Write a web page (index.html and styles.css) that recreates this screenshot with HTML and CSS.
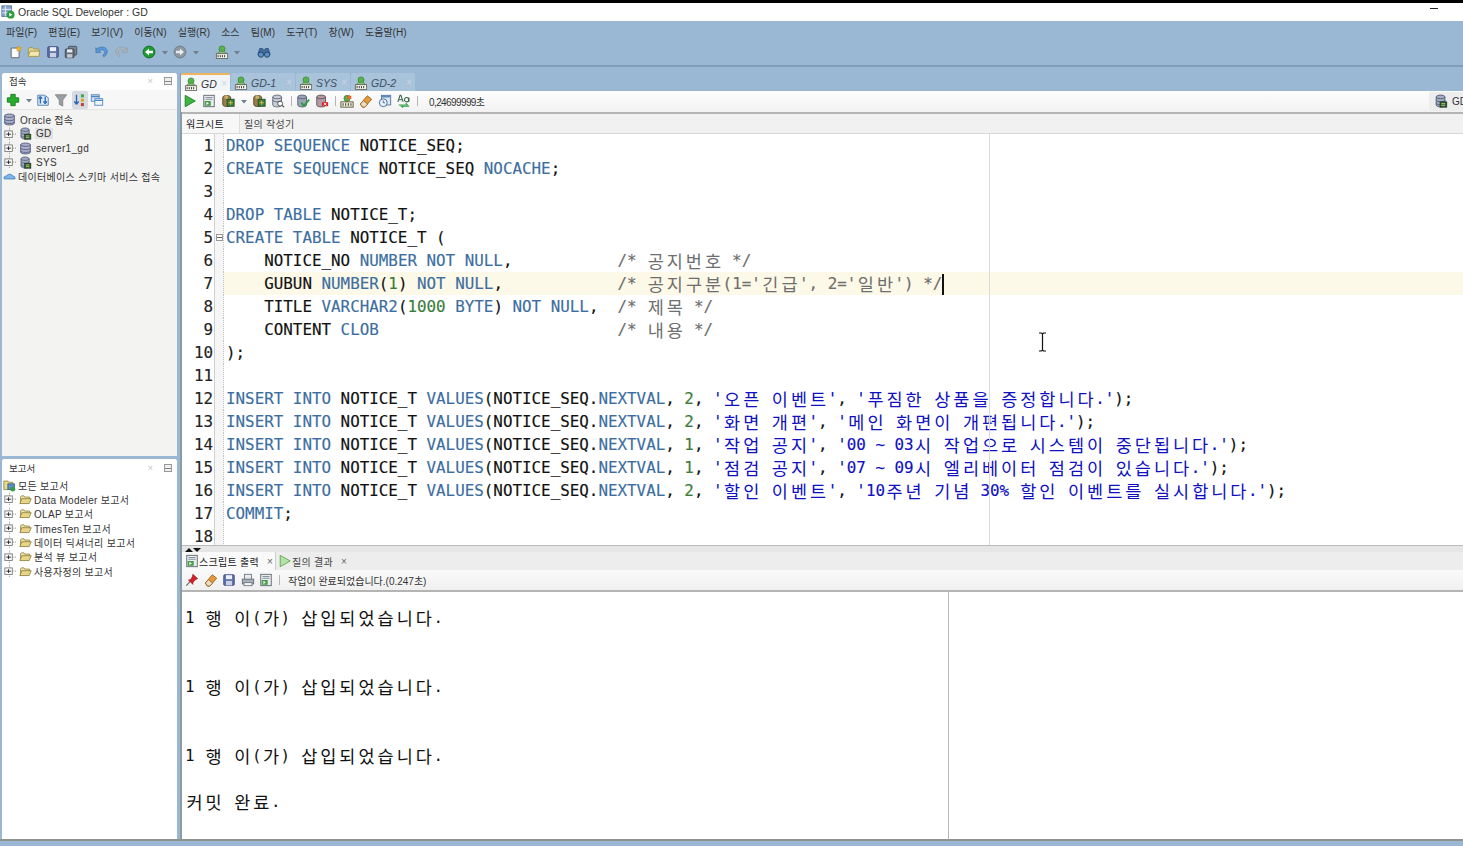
FILE: index.html
```html
<!DOCTYPE html>
<html lang="ko">
<head>
  <meta charset="UTF-8">
  <title>Oracle SQL Developer : GD</title>
  <link rel="stylesheet" href="styles.css">
</head>
<body>
  <!-- icon sheet -->
  <svg class="sheet" width="0" height="0">
    <defs>
      <symbol id="app" viewBox="0 0 16 16"><rect x="1" y="1" width="11" height="12" fill="#8aa4c8" stroke="#4f6f9c"/><path d="M1 5h11M1 9h11M5 1v12" stroke="#e8eef6"/><circle cx="11" cy="11" r="4.5" fill="#2e9e3c"/><path d="M9.5 8.8v4.4l3.6-2.2z" fill="#fff"/></symbol>
      <symbol id="new" viewBox="0 0 16 16"><path d="M2.5 3.5h9v11h-9z" fill="#fbfbfb" stroke="#59606a"/><path d="M11 .8l1.2 2 2.3.3-1.6 1.6.4 2.3-2.3-1-2 1 .3-2.3L8 3.1l2.3-.3z" fill="#f4b728" stroke="#c9851b" stroke-width=".5"/></symbol>
      <symbol id="open" viewBox="0 0 16 16"><path d="M1.5 4.5l1-1.5h4l1 1.5h6v8.5h-12z" fill="#e3d58a" stroke="#a39550"/><path d="M1.5 13l2-6h11l-1 6z" fill="#f3e9ae" stroke="#a39550"/></symbol>
      <symbol id="save" viewBox="0 0 16 16"><rect x="2" y="2" width="12" height="12" rx="1" fill="#5d6fa8" stroke="#3e4c7e"/><rect x="4.5" y="2.5" width="7" height="4.5" fill="#eef1f8"/><rect x="4.5" y="9" width="7" height="5" fill="#c9d0e4"/></symbol>
      <symbol id="saveall" viewBox="0 0 16 16"><rect x="5" y="1.5" width="9.5" height="10" rx="1" fill="#7c8794" stroke="#454d58"/><rect x="1.5" y="4.5" width="10" height="10" rx="1" fill="#66707e" stroke="#3d444e"/><rect x="3.5" y="5" width="6" height="3.5" fill="#e8ebef"/><rect x="3.5" y="10.5" width="6" height="4" fill="#c3c8cf"/></symbol>
      <symbol id="undo" viewBox="0 0 16 16"><path d="M2 5c3-3.5 9-3.5 11.500 0 1.500 3-.5 7-3.500 8.500l-1-2c2-1.200 2.800-3 2-4.500-1.500-2-4.500-2-6.500-.5l2 2H1V3z" fill="#5b9bd9" stroke="#2f6aa8" stroke-width=".7"/></symbol>
      <symbol id="redo" viewBox="0 0 16 16"><path d="M14 5c-3-3.500-9-3.500-11.500 0-1.500 3 .5 7 3.500 8.500l1-2c-2-1.200-2.800-3-2-4.500 1.500-2 4.500-2 6.500-.5l-2 2H15V3z" fill="#a9b5bd" stroke="#8d99a1" stroke-width=".7"/></symbol>
      <symbol id="back" viewBox="0 0 16 16"><circle cx="8" cy="8" r="6.800" fill="#1f9a32" stroke="#0f6b20"/><path d="M3.500 8l4.500-4v2.500h4.500v3H8V12z" fill="#fff"/></symbol>
      <symbol id="fwd" viewBox="0 0 16 16"><circle cx="8" cy="8" r="6.800" fill="#8c979f" stroke="#6e7880"/><path d="M12.500 8L8 4v2.500H3.500v3H8V12z" fill="#e9edf0"/></symbol>
      <symbol id="down" viewBox="0 0 8 16"><path d="M1 7h6l-3 3.500z" fill="#6d7f90"/></symbol>
      <symbol id="conn" viewBox="0 0 16 16"><circle cx="8" cy="4.500" r="3.500" fill="#58b34c" stroke="#2f7e2a" stroke-width=".7"/><path d="M3 11c0-3 2-4 5-4s5 1 5 4z" fill="#8bbd7a" stroke="#4d7f45" stroke-width=".7"/><rect x="1.500" y="10" width="13" height="5.500" fill="#f7f7ef" stroke="#4a4a3c" stroke-width=".8"/><path d="M3.500 11.500v2.500M6 11.500v2.500M8.500 11.500v2.500M11 11.500v2.500" stroke="#333" stroke-width="1.100"/></symbol>
      <symbol id="binoc" viewBox="0 0 16 16"><path d="M1 11l2-7h3.500l1 2h1l1-2H13l2 7z" fill="#3f6ea3" stroke="#1f3f66" stroke-width=".7"/><circle cx="4.500" cy="11" r="3" fill="#5d8fc4" stroke="#1f3f66"/><circle cx="11.500" cy="11" r="3" fill="#5d8fc4" stroke="#1f3f66"/></symbol>
      <symbol id="run" viewBox="0 0 16 16"><path d="M2.500 1.500v13l11.500-6.500z" fill="#3fb53f" stroke="#1d7d2a"/></symbol>
      <symbol id="script" viewBox="0 0 16 16"><rect x="2" y="1.500" width="12" height="13" fill="#e8ecef" stroke="#59636e"/><path d="M4 4h8M4 6h8" stroke="#7d8994"/><rect x="3" y="8" width="7" height="5.500" fill="#4b9d4c"/><path d="M5 9v3.500l3-1.800z" fill="#fff"/></symbol>
      <symbol id="dbrun" viewBox="0 0 16 16"><path d="M2 4c0-3 9-3 9 0v8c0 3-9 3-9 0z" fill="#9b7e4b" stroke="#544121"/><rect x="7" y="6" width="8" height="8" fill="#3d7d3d" stroke="#244d24"/><path d="M8.500 10h5M11 7.500v5" stroke="#e8c53c"/><circle cx="6" cy="3.500" r="2.200" fill="#c6b36e"/></symbol>
      <symbol id="dbq" viewBox="0 0 16 16"><path d="M2 3.500c0-3 10-3 10 0v9c0 3-10 3-10 0z" fill="#c9cdd6" stroke="#5f6676"/><path d="M2 3.500c0 2.500 10 2.500 10 0M2 7c0 2.500 10 2.500 10 0" fill="none" stroke="#5f6676"/><circle cx="10.500" cy="11" r="2.800" fill="#fff" stroke="#444"/><path d="M12.500 13l2.500 2" stroke="#444" stroke-width="1.400"/></symbol>
      <symbol id="dbok" viewBox="0 0 16 16"><path d="M2 3.500c0-3 10-3 10 0v9c0 3-10 3-10 0z" fill="#9aa3b8" stroke="#535c72"/><path d="M2 3.500c0 2.500 10 2.500 10 0" fill="none" stroke="#535c72"/><path d="M6 10l3 3.500 6-7" fill="none" stroke="#2f9d3c" stroke-width="2.200"/></symbol>
      <symbol id="dbno" viewBox="0 0 16 16"><path d="M2 3.500c0-3 10-3 10 0v9c0 3-10 3-10 0z" fill="#b39aa4" stroke="#5f4f58"/><path d="M2 3.500c0 2.500 10 2.500 10 0" fill="none" stroke="#5f4f58"/><rect x="8" y="9" width="7" height="5" rx="1" fill="#d12a2a"/><path d="M10 10l3 3M13 10l-3 3" stroke="#fff"/></symbol>
      <symbol id="sqlstar" viewBox="0 0 16 16"><circle cx="8" cy="5" r="3.500" fill="#59ad4a" stroke="#33722c" stroke-width=".7"/><path d="M10.500 .5l1 1.700 2-.2-1 1.800 1 1.700-2-.2-1 1.500-1-1.500-2 .2 1-1.700-1-1.800 2 .2z" fill="#e8662c"/><rect x="1" y="9" width="14" height="6" fill="#f7f3dc" stroke="#4f4a2f"/><path d="M3.500 10.500v3M6.500 10.500v3M9.500 10.500v3M12.500 10.500v3" stroke="#333" stroke-width="1.100"/></symbol>
      <symbol id="eraser" viewBox="0 0 16 16"><path d="M1.500 11.500l8-9.500 5 4-8 9H4z" fill="#e59a3a" stroke="#9c5f18"/><path d="M1.500 11.500L5 7.500l5 4-3.500 3.500H4z" fill="#e9dcc4" stroke="#9c5f18"/></symbol>
      <symbol id="monitor" viewBox="0 0 16 16"><rect x="4" y="1.500" width="10.500" height="11" fill="#dbe6f2" stroke="#4e6f96"/><rect x="4" y="1.500" width="10.500" height="2.500" fill="#5d8ac0"/><circle cx="6" cy="10" r="4.500" fill="#e8f0f8" stroke="#3f6795"/><path d="M6 7.500V10h2" fill="none" stroke="#3f6795"/></symbol>
      <symbol id="case" viewBox="0 0 16 16"><path d="M1 9l2.500-7.500h1L7 9M2 6.500h4" fill="none" stroke="#37654a" stroke-width="1.200"/><circle cx="11" cy="6.500" r="2.500" fill="none" stroke="#37654a" stroke-width="1.200"/><path d="M13.500 4v5" stroke="#37654a" stroke-width="1.200"/><path d="M2 12.500h10l-2-2M14 14H5l2 1.500" fill="none" stroke="#36a04a" stroke-width="1.200"/></symbol>
      <symbol id="gdb" viewBox="0 0 16 16"><path d="M2.500 3.500c0-3 10-3 10 0v9c0 3-10 3-10 0z" fill="#a4adc6" stroke="#4d566f"/><path d="M2.500 3.500c0 2.500 10 2.500 10 0M2.500 7c0 2.500 10 2.500 10 0M2.500 10.500c0 2.500 10 2.500 10 0" fill="none" stroke="#4d566f"/><rect x="7" y="9" width="7.500" height="6" fill="#375e3c" stroke="#1f3a24"/><path d="M8.500 11h4M8.500 13h4" stroke="#b9d85a"/></symbol>
      <symbol id="db" viewBox="0 0 16 16"><path d="M2 3.500c0-3 12-3 12 0v9c0 3-12 3-12 0z" fill="#a9aecb" stroke="#4f5578"/><path d="M2 3.500c0 2.500 12 2.500 12 0M2 7.500c0 2.500 12 2.500 12 0M2 11c0 2.500 12 2.500 12 0" fill="none" stroke="#4f5578"/></symbol>
      <symbol id="cloud" viewBox="0 0 16 16"><path d="M1.500 11c-1-2 .5-4 3-3.500C5.500 4.500 11 4.500 12 7.500c2.500 0 3.500 2 2.500 3.500z" fill="#7fb6e8" stroke="#3d7cb8"/></symbol>
      <symbol id="expand" viewBox="0 0 14 14"><path d="M7 0v14M7 7h7" stroke="#8a8a8a" stroke-dasharray="1 1" fill="none"/><rect x="2.500" y="4.500" width="8" height="7" fill="#fff" stroke="#7b7b7b" transform="translate(-.5 -1)"/><path d="M3.500 7h5M6 5v4" stroke="#222"/></symbol>
      <symbol id="plus" viewBox="0 0 16 16"><path d="M5.500 1.500h5v4h4v5h-4v4h-5v-4h-4v-5h4z" fill="#27ad2c" stroke="#157c1a"/></symbol>
      <symbol id="refresh" viewBox="0 0 16 16"><path d="M2 2.500h8l4 3v8.500H2z" fill="#dfe9f3" stroke="#4a7cb0"/><path d="M5 4v8M5 4L3 6.500M5 4l2 2.500M10.500 12V4M10.500 12l-2-2.500M10.500 12l2-2.500" fill="none" stroke="#2c6db5" stroke-width="1.500"/></symbol>
      <symbol id="filter" viewBox="0 0 16 16"><path d="M1.500 2h13L10 8v7l-4-2V8z" fill="#9b9ea2" stroke="#85888c"/></symbol>
      <symbol id="sort" viewBox="0 0 16 16"><path d="M4 2v10M4 13L1.500 9.500M4 13l2.500-3.500" fill="none" stroke="#2d63b5" stroke-width="1.600"/><rect x="9" y="1.500" width="3.500" height="3.500" fill="#3fa64b"/><rect x="9" y="6.500" width="3.500" height="3.500" fill="#d8a825"/><rect x="9" y="11.500" width="3.500" height="3.500" fill="#c8432f"/></symbol>
      <symbol id="windows" viewBox="0 0 16 16"><rect x="1.500" y="2" width="9" height="7.500" fill="#dbe8f6" stroke="#4f86c0"/><rect x="5.500" y="6.500" width="9" height="7.500" fill="#eef4fb" stroke="#4f86c0"/><path d="M1.500 4h9M5.500 8.500h9" stroke="#4f86c0" stroke-width="1.500"/></symbol>
      <symbol id="rep" viewBox="0 0 16 16"><path d="M1 2.500h5l1 1.500h5v9H1z" fill="#e9d98c" stroke="#8f8240"/><rect x="6" y="6" width="8" height="7" fill="#5e8ec4" stroke="#2f5a8e"/><circle cx="12" cy="12.500" r="3" fill="#35a043"/></symbol>
      <symbol id="folder" viewBox="0 0 16 16"><path d="M2 12.500V4.500l1-1h3l1 1.500h6v2" fill="#f0e4a8" stroke="#8a7c3a"/><path d="M1 13l2.500-6H15l-2.500 6z" fill="#e8d587" stroke="#8a7c3a"/></symbol>
      <symbol id="pin" viewBox="0 0 16 16"><path d="M1.500 14.500l4.500-5" stroke="#666" stroke-width="1.300"/><path d="M9 1.500l5.500 5-2.500 1-3 3.500 0 2L4 8l2.500-.5 2-3.500z" fill="#d51f26" stroke="#8c1116" stroke-width=".7"/></symbol>
      <symbol id="print" viewBox="0 0 16 16"><rect x="4" y="1.500" width="8" height="6" fill="#e9ecef" stroke="#6c7682"/><rect x="1.500" y="7" width="13" height="5.500" fill="#a8b0ba" stroke="#626c77"/><rect x="3.500" y="11" width="9" height="3.500" fill="#f5f6f7" stroke="#6c7682"/></symbol>
      <symbol id="play" viewBox="0 0 16 16"><path d="M2.500 1.500v13l11.500-6.500z" fill="#b5e0a8" stroke="#5fa54f"/></symbol>
    </defs>
  </svg>

  <div class="topline"></div>
  <div class="titlebar">
    <svg class="ic"><use href="#app"/></svg>
    <span>Oracle SQL Developer : GD</span>
    <span class="minimize"></span>
  </div>

  <nav class="menubar">
    <span>파일(F)</span><span>편집(E)</span><span>보기(V)</span><span>이동(N)</span><span>실행(R)</span><span>소스</span><span>팀(M)</span><span>도구(T)</span><span>창(W)</span><span>도움말(H)</span>
  </nav>
  <div class="maintools">
    <svg class="ic"><use href="#new"/></svg>
    <svg class="ic"><use href="#open"/></svg>
    <svg class="ic"><use href="#save"/></svg>
    <svg class="ic"><use href="#saveall"/></svg>
    <svg class="ic lg"><use href="#undo"/></svg>
    <svg class="ic"><use href="#redo"/></svg>
    <svg class="ic lg lg2"><use href="#back"/></svg>
    <svg class="arr"><use href="#down"/></svg>
    <svg class="ic"><use href="#fwd"/></svg>
    <svg class="arr"><use href="#down"/></svg>
    <svg class="ic mid"><use href="#conn"/></svg>
    <svg class="arr"><use href="#down"/></svg>
    <svg class="ic mid"><use href="#binoc"/></svg>
  </div>
  <div class="dockline"></div>

  <div class="workspace">
    <aside class="side">
      <section class="panel panel-conn">
        <header class="panel-head"><span>접속</span><b>×</b><i></i></header>
        <div class="panel-tools">
          <svg class="ic"><use href="#plus"/></svg>
          <svg class="arr"><use href="#down"/></svg>
          <svg class="ic"><use href="#refresh"/></svg>
          <svg class="ic"><use href="#filter"/></svg>
          <span class="pressed"><svg class="ic"><use href="#sort"/></svg></span>
          <svg class="ic"><use href="#windows"/></svg>
        </div>
        <div class="tree">
          <div class="node root"><svg class="ic"><use href="#db"/></svg><span>Oracle 접속</span></div>
          <div class="node"><svg class="ex"><use href="#expand"/></svg><svg class="ic"><use href="#gdb"/></svg><span class="sel">GD</span></div>
          <div class="node"><svg class="ex"><use href="#expand"/></svg><svg class="ic"><use href="#db"/></svg><span>server1_gd</span></div>
          <div class="node"><svg class="ex"><use href="#expand"/></svg><svg class="ic"><use href="#gdb"/></svg><span>SYS</span></div>
          <div class="node root"><svg class="ic"><use href="#cloud"/></svg><span class="tight">데이터베이스 스키마 서비스 접속</span></div>
        </div>
      </section>
      <section class="panel panel-rep">
        <header class="panel-head"><span>보고서</span><b>×</b><i></i></header>
        <div class="tree">
          <div class="node root"><svg class="ic"><use href="#rep"/></svg><span class="tight">모든 보고서</span></div>
          <div class="node"><svg class="ex"><use href="#expand"/></svg><svg class="ic"><use href="#folder"/></svg><span>Data Modeler 보고서</span></div>
          <div class="node"><svg class="ex"><use href="#expand"/></svg><svg class="ic"><use href="#folder"/></svg><span>OLAP 보고서</span></div>
          <div class="node"><svg class="ex"><use href="#expand"/></svg><svg class="ic"><use href="#folder"/></svg><span>TimesTen 보고서</span></div>
          <div class="node"><svg class="ex"><use href="#expand"/></svg><svg class="ic"><use href="#folder"/></svg><span>데이터 딕셔너리 보고서</span></div>
          <div class="node"><svg class="ex"><use href="#expand"/></svg><svg class="ic"><use href="#folder"/></svg><span>분석 뷰 보고서</span></div>
          <div class="node"><svg class="ex"><use href="#expand"/></svg><svg class="ic"><use href="#folder"/></svg><span>사용자정의 보고서</span></div>
        </div>
      </section>
    </aside>

    <main class="center">
      <div class="tabs">
        <div class="tab active"><svg class="ic"><use href="#conn"/></svg><em>GD</em><b>×</b></div>
        <div class="tab"><svg class="ic"><use href="#conn"/></svg><em>GD-1</em><b>×</b></div>
        <div class="tab"><svg class="ic"><use href="#conn"/></svg><em>SYS</em><b>×</b></div>
        <div class="tab"><svg class="ic"><use href="#conn"/></svg><em>GD-2</em><b>×</b></div>
      </div>
      <div class="sheet-tools">
        <svg class="ic"><use href="#run"/></svg>
        <svg class="ic"><use href="#script"/></svg>
        <svg class="ic"><use href="#dbrun"/></svg>
        <svg class="arr"><use href="#down"/></svg>
        <svg class="ic"><use href="#dbrun"/></svg>
        <svg class="ic"><use href="#dbq"/></svg>
        <span class="sep"></span>
        <svg class="ic"><use href="#dbok"/></svg>
        <svg class="ic"><use href="#dbno"/></svg>
        <span class="sep"></span>
        <svg class="ic"><use href="#sqlstar"/></svg>
        <svg class="ic"><use href="#eraser"/></svg>
        <svg class="ic"><use href="#monitor"/></svg>
        <svg class="ic"><use href="#case"/></svg>
        <span class="sep"></span>
        <span class="elapsed">0,24699999초</span>
        <span class="conn-pick"><svg class="ic"><use href="#gdb"/></svg>GD</span>
      </div>
      <div class="subtabs">
        <span class="subtab on">워크시트</span>
        <span class="subtab">질의 작성기</span>
      </div>

      <div class="editor">
        <div class="line"><span class="n">1</span><span class="gut"></span><span class="t"><u>DROP SEQUENCE</u> NOTICE_SEQ;</span></div>
        <div class="line"><span class="n">2</span><span class="gut"></span><span class="t"><u>CREATE SEQUENCE</u> NOTICE_SEQ <u>NOCACHE</u>;</span></div>
        <div class="line"><span class="n">3</span><span class="gut"></span><span class="t"></span></div>
        <div class="line"><span class="n">4</span><span class="gut"></span><span class="t"><u>DROP TABLE</u> NOTICE_T;</span></div>
        <div class="line"><span class="n">5</span><span class="gut"><span class="fold"></span></span><span class="t"><u>CREATE TABLE</u> NOTICE_T (</span></div>
        <div class="line"><span class="n">6</span><span class="gut"></span><span class="t">    NOTICE_NO <u>NUMBER NOT NULL</u>,           <s>/* <i class="h">공지번호</i> */</s></span></div>
        <div class="line cur"><span class="n">7</span><span class="gut"></span><span class="t">    GUBUN <u>NUMBER</u>(<q>1</q>) <u>NOT NULL</u>,            <s>/* <i class="h">공지구분</i>(1='<i class="h">긴급</i>', 2='<i class="h">일반</i>') */</s><span class="caret"></span></span></div>
        <div class="line"><span class="n">8</span><span class="gut"></span><span class="t">    TITLE <u>VARCHAR2</u>(<q>1000</q> <u>BYTE</u>) <u>NOT NULL</u>,  <s>/* <i class="h">제목</i> */</s></span></div>
        <div class="line"><span class="n">9</span><span class="gut"></span><span class="t">    CONTENT <u>CLOB</u>                         <s>/* <i class="h">내용</i> */</s></span></div>
        <div class="line"><span class="n">10</span><span class="gut"></span><span class="t">);</span></div>
        <div class="line"><span class="n">11</span><span class="gut"></span><span class="t"></span></div>
        <div class="line"><span class="n">12</span><span class="gut"></span><span class="t"><u>INSERT INTO</u> NOTICE_T <u>VALUES</u>(NOTICE_SEQ.<u>NEXTVAL</u>, <q>2</q>, <mark>'<i class="h">오픈</i> <i class="h">이벤트</i>'</mark>, <mark>'<i class="h">푸짐한</i> <i class="h">상품을</i> <i class="h">증정합니다</i>.'</mark>);</span></div>
        <div class="line"><span class="n">13</span><span class="gut"></span><span class="t"><u>INSERT INTO</u> NOTICE_T <u>VALUES</u>(NOTICE_SEQ.<u>NEXTVAL</u>, <q>2</q>, <mark>'<i class="h">화면</i> <i class="h">개편</i>'</mark>, <mark>'<i class="h">메인</i> <i class="h">화면이</i> <i class="h">개편됩니다</i>.'</mark>);</span></div>
        <div class="line"><span class="n">14</span><span class="gut"></span><span class="t"><u>INSERT INTO</u> NOTICE_T <u>VALUES</u>(NOTICE_SEQ.<u>NEXTVAL</u>, <q>1</q>, <mark>'<i class="h">작업</i> <i class="h">공지</i>'</mark>, <mark>'00 ~ 03<i class="h">시</i> <i class="h">작업으로</i> <i class="h">시스템이</i> <i class="h">중단됩니다</i>.'</mark>);</span></div>
        <div class="line"><span class="n">15</span><span class="gut"></span><span class="t"><u>INSERT INTO</u> NOTICE_T <u>VALUES</u>(NOTICE_SEQ.<u>NEXTVAL</u>, <q>1</q>, <mark>'<i class="h">점검</i> <i class="h">공지</i>'</mark>, <mark>'07 ~ 09<i class="h">시</i> <i class="h">엘리베이터</i> <i class="h">점검이</i> <i class="h">있습니다</i>.'</mark>);</span></div>
        <div class="line"><span class="n">16</span><span class="gut"></span><span class="t"><u>INSERT INTO</u> NOTICE_T <u>VALUES</u>(NOTICE_SEQ.<u>NEXTVAL</u>, <q>2</q>, <mark>'<i class="h">할인</i> <i class="h">이벤트</i>'</mark>, <mark>'10<i class="h">주년</i> <i class="h">기념</i> 30% <i class="h">할인</i> <i class="h">이벤트를</i> <i class="h">실시합니다</i>.'</mark>);</span></div>
        <div class="line"><span class="n">17</span><span class="gut"></span><span class="t"><u>COMMIT</u>;</span></div>
        <div class="line"><span class="n">18</span><span class="gut"></span><span class="t"></span></div>
        <div class="margin-line"></div>
        <svg class="ibeam" width="9" height="20" viewBox="0 0 9 20"><path d="M1 1h2.500l1 1 1-1H8M4.500 2v16M1 19h2.500l1-1 1 1H8" fill="none" stroke="#111" stroke-width="1.200"/></svg>
      </div>

      <div class="splitter"><span class="up"></span><span class="dn"></span></div>

      <div class="out-tabs">
        <div class="out-tab on"><svg class="ic"><use href="#script"/></svg><span>스크립트 출력</span><b>×</b></div>
        <div class="out-tab"><svg class="ic"><use href="#play"/></svg><span>질의 결과</span><b>×</b></div>
      </div>
      <div class="out-tools">
        <svg class="ic"><use href="#pin"/></svg>
        <svg class="ic"><use href="#eraser"/></svg>
        <svg class="ic"><use href="#save"/></svg>
        <svg class="ic"><use href="#print"/></svg>
        <svg class="ic"><use href="#script"/></svg>
        <span class="sep"></span>
        <span class="status">작업이 완료되었습니다.(0.247초)</span>
      </div>
      <div class="output">
        <div class="oline">1 <i class="h">행</i> <i class="h">이</i>(<i class="h">가</i>) <i class="h">삽입되었습니다</i>.</div>
        <div class="oline"></div>
        <div class="oline"></div>
        <div class="oline">1 <i class="h">행</i> <i class="h">이</i>(<i class="h">가</i>) <i class="h">삽입되었습니다</i>.</div>
        <div class="oline"></div>
        <div class="oline"></div>
        <div class="oline">1 <i class="h">행</i> <i class="h">이</i>(<i class="h">가</i>) <i class="h">삽입되었습니다</i>.</div>
        <div class="oline"></div>
        <div class="oline"><i class="h">커밋</i> <i class="h">완료</i>.</div>
        <div class="margin-line out"></div>
      </div>
    </main>
  </div>
  <div class="bottombar"></div>
</body>
</html>
```
FILE: styles.css
```css
* {
  margin: 0;
  padding: 0;
  box-sizing: border-box;
}
html, body {
  height: 846px;
  overflow: hidden;
}
body {
  display: flex;
  flex-direction: column;
  background: #9ab8d3;
  color: #222;
  font-family: "Liberation Sans", "Noto Sans CJK KR", sans-serif;
  font-size: 10px;
}
.sheet {
  position: absolute;
}
.ic {
  width: 14px;
  height: 14px;
  flex: none;
  display: block;
}
.arr {
  width: 8px;
  height: 16px;
  flex: none;
}
.topline {
  height: 3px;
  flex: none;
  background: #000;
}
.titlebar {
  height: 18px;
  flex: none;
  display: flex;
  align-items: center;
  gap: 3px;
  padding-left: 1px;
  background: #fff;
  font-size: 10.5px;
  color: #333;
}
.minimize {
  width: 8px;
  height: 1px;
  background: #222;
  margin: -7px 25px 0 auto;
}
.menubar {
  height: 21px;
  flex: none;
  display: flex;
  align-items: center;
  gap: 11.200px;
  padding-left: 6px;
  color: #333;
}
.maintools {
  height: 20px;
  flex: none;
  display: flex;
  align-items: center;
  gap: 4.400px;
  padding-left: 9px;
}
.maintools .lg {
  margin-left: 12px;
}
.maintools .lg2 {
  margin-left: 9.600px;
}
.maintools .lg + .ic {
  margin-left: 1px;
}
.maintools .lg + .arr {
  margin-left: .6px;
}
.maintools .mid {
  margin-left: 11px;
}
.dockline {
  height: 2px;
  flex: none;
  margin-top: 3px;
  background: #7e9db9;
}
.workspace {
  flex: 1;
  min-height: 0;
  display: flex;
  padding-top: 6px;
}

/* left column */
.side {
  width: 180px;
  flex: none;
  display: flex;
  flex-direction: column;
  gap: 3px;
  padding: 0 3px 0 2px;
}
.panel {
  background: #fff;
  border-radius: 3px 3px 0 0;
}
.panel-conn {
  height: 383px;
  flex: none;
  background: #f3f3f2;
}
.panel-rep {
  flex: 1;
}
.panel-head {
  height: 17px;
  display: flex;
  align-items: center;
  padding: 0 5px 0 7px;
  background: #fff;
  border-radius: 3px 3px 0 0;
  color: #333;
  font-size: 9.500px;
}
.panel-conn .panel-head {
  padding-bottom: 2px;
}
.panel-head b {
  margin-left: auto;
  color: #c4c4c4;
  font-weight: 400;
}
.panel-head i {
  width: 8px;
  height: 8px;
  margin-left: 11px;
  border: 1px solid #999;
  background: linear-gradient(#eee 3px, #888 3px, #888 4px, #eee 4px);
}
.panel-tools {
  height: 20px;
  display: flex;
  align-items: center;
  gap: 2px;
  padding-left: 4px;
  background: #f7f7f7;
  border-bottom: 1px solid #e3e3e3;
}
.panel-tools .arr {
  margin: 0 1px;
}
.panel-tools .ic {
  margin-right: 2px;
}
.pressed {
  height: 18px;
  padding: 2px 1px;
  background: #d6dbe2;
  border-radius: 2px;
}
.pressed .ic {
  margin: 0;
}
.tree {
  padding: 2.500px 0 0 1px;
  font-size: 10px;
  color: #333;
}
.panel-rep .tree {
  padding-top: 2px;
}
.node {
  height: 14.330px;
  display: flex;
  align-items: center;
  white-space: nowrap;
  letter-spacing: .3px;
}
.node .ic {
  width: 13px;
  height: 13px;
  margin-right: 4px;
}
.node .ex {
  width: 13px;
  height: 14.330px;
  flex: none;
}
.node.root .ic {
  margin-right: 4px;
}
.node .ex + .ic {
  margin: 0 4px 0 3px;
}
.panel-rep .node .ex + .ic {
  margin-right: 2px;
}
.node .tight {
  margin-left: -2px;
}
.sel {
  padding: 0 1px;
  margin-left: -1px;
  background: #e3e3e3;
}

/* center column */
.center {
  flex: 1;
  min-width: 0;
  display: flex;
  flex-direction: column;
  padding-left: 2px;
  background: #8b9aa8;
}
.tabs {
  height: 18px;
  flex: none;
  display: flex;
  gap: 1px;
  margin-left: -1px;
  background: #9ab8d3;
}
.tab {
  width: 64px;
  display: flex;
  align-items: center;
  gap: 3px;
  padding: 1px 0 0 3px;
  background: #a9c3da;
  border-radius: 2px 2px 0 0;
  color: #3d4e5f;
}
.tab:nth-child(3) {
  width: 54px;
}
.tab:nth-child(4) {
  width: 64px;
}
.tab.active {
  width: 49px;
  background: #f2f5f8;
  border-top: 2px solid #f0b45c;
  color: #333;
}
.tab em {
  font-family: "Liberation Sans", sans-serif;
  font-size: 10.500px;
}
.tab b {
  margin-left: auto;
  margin-right: 3px;
  color: #c8d6e3;
  font-weight: 400;
}
.sheet-tools {
  height: 21px;
  flex: none;
  display: flex;
  align-items: center;
  gap: 5px;
  padding: 0 0 1px 2px;
  margin-left: -1px;
  background: linear-gradient(#fdfdfd, #f2f2f2);
}
.sheet-tools .arr {
  margin: 0 -1px 0 0;
}
.sep {
  width: 1px;
  height: 10px;
  flex: none;
  margin: 0 -1px 0 1px;
  background: #b5b5b5;
}
.elapsed {
  margin-left: 7px;
  letter-spacing: -.6px;
  color: #333;
  white-space: nowrap;
}
.conn-pick {
  display: flex;
  align-items: center;
  gap: 4px;
  height: 19px;
  margin-left: auto;
  width: 34px;
  padding-left: 5px;
  flex: none;
  overflow: hidden;
  background: #ededed;
  border-radius: 2px 0 0 2px;
  white-space: nowrap;
  color: #333;
}
.subtabs {
  height: 22px;
  flex: none;
  display: flex;
  border-top: 2px solid #b4b4b4;
  background: #f1f1f1;
  border-bottom: 1px solid #d8d8d8;
  color: #444;
  letter-spacing: .3px;
}
.subtab {
  display: flex;
  align-items: center;
  padding: 0 4px;
}
.subtab.on {
  width: 58px;
  background: #f7f7f7;
  border-right: 1px solid #ddd;
  color: #222;
}

/* editor */
.editor {
  position: relative;
  height: 411px;
  flex: none;
  overflow: hidden;
  background: #fff;
  font-family: "DejaVu Sans Mono", "Noto Sans CJK KR", monospace;
  font-size: 15.870px;
  color: #111;
  -webkit-text-stroke: .15px currentColor;
}
.line {
  height: 23px;
  display: flex;
  line-height: 23px;
}
.n {
  width: 31px;
  flex: none;
  text-align: right;
  color: #222;
}
.gut {
  width: 10px;
  flex: none;
  display: flex;
  align-items: center;
  justify-content: center;
  margin-left: 1px;
  background: #f6f6f6;
  border-left: 1px solid #d0d0d0;
  border-right: 1px dotted #c4c4c4;
}
.fold {
  width: 7px;
  height: 7px;
  border: 1px solid #999;
  background: linear-gradient(#fff 2px, #666 2px, #666 3px, #fff 3px);
}
.t {
  flex: 1;
  padding-left: 2px;
  white-space: pre;
}
.cur .t {
  background: #fdf9e8;
}
.caret {
  display: inline-block;
  width: 2px;
  height: 21px;
  vertical-align: middle;
  background: #111;
}
.t u {
  text-decoration: none;
  color: #3c6e9f;
}
.t q {
  quotes: none;
  color: #3a7d3a;
}
.t mark {
  background: none;
  color: #1010c0;
}
.t s {
  text-decoration: none;
  color: #6e6e6e;
}
.h {
  font-family: "Noto Sans CJK KR", sans-serif;
  font-size: 17.500px;
  font-style: normal;
  line-height: 1;
  letter-spacing: 3px;
  padding-left: 1.500px;
  margin-right: -1.500px;
  vertical-align: -1.500px;
  -webkit-text-stroke: 0;
}
.margin-line {
  position: absolute;
  top: 0;
  bottom: 0;
  left: 807px;
  width: 1px;
  background: #d9d9d9;
}
.margin-line.out {
  left: 766px;
  background: #b9b9b9;
}
.ibeam {
  position: absolute;
  left: 856px;
  top: 198px;
}
.splitter {
  height: 7px;
  flex: none;
  display: flex;
  align-items: flex-end;
  padding-left: 3px;
  background: #e6e6e6;
  border-top: 1px solid #bbb;
}
.splitter span {
  width: 0;
  height: 0;
  border-left: 4px solid transparent;
  border-right: 4px solid transparent;
}
.splitter .up {
  border-bottom: 4px solid #111;
}
.splitter .dn {
  border-top: 4px solid #111;
}
.out-tabs {
  height: 18px;
  flex: none;
  display: flex;
  background: #ededed;
  color: #444;
  letter-spacing: .3px;
}
.out-tab {
  display: flex;
  align-items: center;
  padding: 0 2px;
  font-size: 10px;
  white-space: nowrap;
}
.out-tab:first-child {
  width: 94px;
  padding-left: 3px;
}
.out-tab.on {
  background: #f9f9f9;
  border-right: 1px solid #ccc;
  color: #222;
}
.out-tab b {
  margin-left: 8px;
  font-weight: 400;
  color: #666;
}
.out-tools {
  height: 22px;
  flex: none;
  display: flex;
  align-items: center;
  gap: 4.500px;
  padding-left: 3px;
  background: linear-gradient(#fafafa, #f0f0f0);
  border-bottom: 2px solid #b4b4b4;
  color: #333;
}
.status {
  margin-left: 5px;
  font-size: 10px;
  white-space: nowrap;
}
.output {
  position: relative;
  flex: 1;
  min-height: 0;
  padding: 14px 0 0 3px;
  background: #fff;
  font-family: "DejaVu Sans Mono", "Noto Sans CJK KR", monospace;
  font-size: 15.870px;
  color: #111;
}
.oline {
  height: 23px;
  line-height: 23px;
  white-space: pre;
}
.bottombar {
  height: 7px;
  flex: none;
  border-top: 2px solid #8f948f;
  background: #9ab8d3;
}
```
